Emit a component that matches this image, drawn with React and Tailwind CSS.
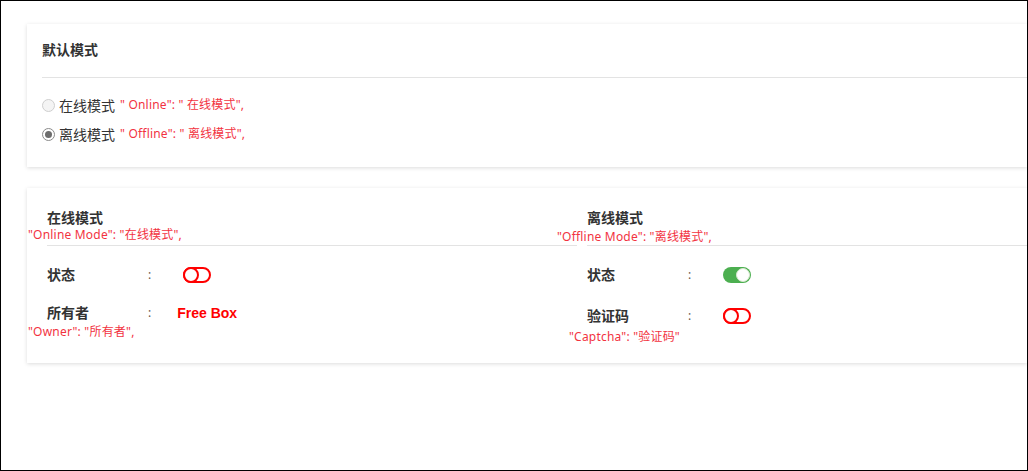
import React from 'react';

const font = "font-['Noto_Sans','Noto_Sans_CJK_SC',sans-serif]";

function Radio({ checked }) {
  return checked ? (
    <span className="w-[13px] h-[13px] rounded-full border border-[#8a8a8a] bg-white flex items-center justify-center shrink-0">
      <span className="w-[7px] h-[7px] rounded-full bg-[#6d6d6d]" />
    </span>
  ) : (
    <span className="w-[13px] h-[13px] rounded-full border border-[#cfcfcf] bg-[#f4f4f4] shrink-0" />
  );
}

function Toggle({ on }) {
  if (on) {
    return (
      <span className="relative w-[28px] h-[16px] rounded-full bg-[#4caf50] block">
        <span className="absolute right-[1px] top-[1px] w-[14px] h-[14px] rounded-full bg-white border border-[#d8e8d0]" />
      </span>
    );
  }
  return (
    <span className="relative w-[28px] h-[16px] rounded-full border-2 border-[#ff0000] bg-white block">
      <span className="absolute left-[-2px] top-[-2px] w-[16px] h-[16px] rounded-full border-2 border-[#ff0000] bg-white" />
    </span>
  );
}

function Row({ label, children, className = '' }) {
  return (
    <div className={`flex items-center h-[20px] leading-[20px] ${className}`}>
      <span className="w-[101px] text-[14px] font-bold text-[#333]">{label}</span>
      <span className="text-[12px] text-[#6b5a4a]">:</span>
      {children}
    </div>
  );
}

export default function App() {
  return (
    <div className={`w-[1028px] h-[471px] border border-black bg-white overflow-hidden pl-[26px] pt-[23px] ${font}`}>
      {/* 默认模式 */}
      <div className="bg-white shadow-[0_1px_4px_rgba(0,0,0,0.14)] pl-[15px] pt-[16px] pb-[23px]">
        <div className="text-[14px] font-bold text-[#333] leading-[20px]">默认模式</div>
        <div className="mt-[17px] h-px bg-[#e3e3e3]" />
        <div className="mt-[17px] flex items-center h-[20px]">
          <Radio />
          <span className="ml-[4px] text-[14px] text-[#333]">在线模式</span>
          <span className="ml-[5px] text-[12px] text-[#f2333f] whitespace-pre tracking-[0.2px]">" Online": " 在线模式",</span>
        </div>
        <div className="mt-[9px] flex items-center h-[20px]">
          <Radio checked />
          <span className="ml-[4px] text-[14px] text-[#333]">离线模式</span>
          <span className="ml-[5px] text-[12px] text-[#f2333f] whitespace-pre tracking-[0.2px]">" Offline": " 离线模式",</span>
        </div>
      </div>

      {/* 模式设置 */}
      <div className="mt-[21px] bg-white shadow-[0_1px_4px_rgba(0,0,0,0.14)] pt-[20px] pb-[19px] flex items-start">
        <div className="ml-[20px] w-[530px] flex flex-col">
          <div className="text-[14px] font-bold text-[#333] leading-[20px]">在线模式</div>
          <div className="-ml-[19px] text-[12px] leading-[14px] text-[#f2333f] whitespace-pre tracking-[0.2px]">"Online Mode": "在线模式",</div>
          <div className="mt-[3px] h-px bg-[#e3e3e3]" />
          <Row label="状态" className="mt-[19px]">
            <span className="ml-[32px]"><Toggle /></span>
          </Row>
          <Row label="所有者" className="mt-[18px]">
            <span className="ml-[26px] text-[14px] font-bold text-[#ff0000] font-['Liberation_Sans',Arial,sans-serif]">Free Box</span>
          </Row>
          <div className="-ml-[19px] mt-[2px] text-[12px] leading-[14px] text-[#f2333f] whitespace-pre tracking-[0.2px]">"Owner": "所有者",</div>
        </div>

        <div className="ml-[10px] flex-1 flex flex-col">
          <div className="text-[14px] font-bold text-[#333] leading-[20px]">离线模式</div>
          <div className="-ml-[30px] mt-[2px] text-[12px] leading-[14px] text-[#f2333f] whitespace-pre tracking-[0.2px]">"Offline Mode": "离线模式",</div>
          <div className="mt-[1px] h-px bg-[#e3e3e3]" />
          <Row label="状态" className="mt-[19px]">
            <span className="ml-[32px]"><Toggle on /></span>
          </Row>
          <Row label="验证码" className="mt-[21px]">
            <span className="ml-[32px]"><Toggle /></span>
          </Row>
          <div className="-ml-[18px] mt-[4px] text-[12px] leading-[14px] text-[#f2333f] whitespace-pre tracking-[0.2px]">"Captcha": "验证码"</div>
        </div>
      </div>
    </div>
  );
}
